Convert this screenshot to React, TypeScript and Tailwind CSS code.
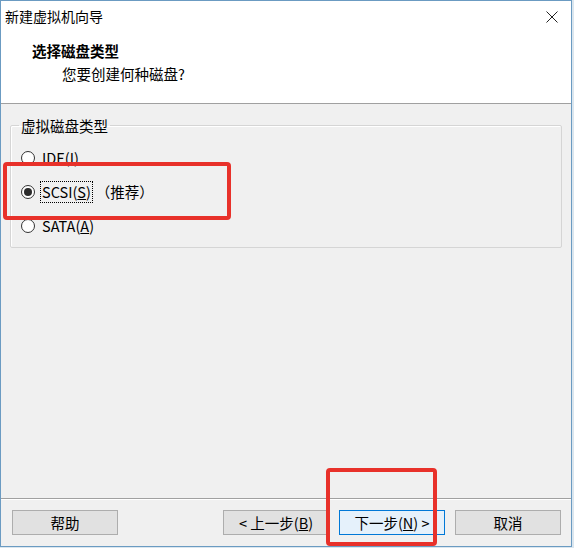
import React from "react";

const FONT = { fontFamily: '"Noto Sans CJK SC", "Noto Sans", "Liberation Sans", sans-serif' };

function Radio({ label, checked, focused, extra }: { label: React.ReactNode; checked?: boolean; focused?: boolean; extra?: string }) {
  return (
    <div className="flex h-[34px] items-center pl-[10px]">
      <span className="flex h-[14px] w-[14px] items-center justify-center rounded-full border border-[#333] bg-white">
        {checked && <span className="h-[8px] w-[8px] rounded-full bg-[#2b2b2b]" />}
      </span>
      <span
        className={
          "ml-[5px] px-[1px] leading-[20px] " +
          (focused ? "border border-dotted border-black" : "border border-transparent")
        }
      >
        {label}
      </span>
      {extra && <span className="ml-[3px]">{extra}</span>}
    </div>
  );
}

function Button({ children, primary }: { children: React.ReactNode; primary?: boolean }) {
  return (
    <button
      className={
        "flex h-[25px] w-[106px] items-center justify-center border text-[14.5px] text-black " +
        (primary ? "border-[#0078d7] bg-[#e5f1fb]" : "border-[#adadad] bg-[#e1e1e1]")
      }
    >
      {children}
    </button>
  );
}

export default function App() {
  return (
    <div className="relative h-[548px] w-[574px] bg-[#dbe6ee] text-black" style={FONT}>
      <div className="flex h-[547px] w-[572px] flex-col border border-[#6b9bc2] bg-[#f0f0f0]">
        {/* Title + header */}
        <div className="h-[103px] border-b border-[#a0a0a0] bg-white">
          <div className="flex h-[31px] items-center justify-between pl-[4px] pr-[13px]">
            <span className="text-[14px]">新建虚拟机向导</span>
            <svg width="12" height="12" viewBox="0 0 12 12">
              <path d="M0.5 0.5 L11.5 11.5 M11.5 0.5 L0.5 11.5" stroke="#222" strokeWidth="1" />
            </svg>
          </div>
          <div className="mt-[9px] pl-[31px] text-[14.5px] font-bold leading-[20px]">选择磁盘类型</div>
          <div className="mt-[3px] pl-[61px] text-[14.5px] leading-[20px]">您要创建何种磁盘?</div>
        </div>

        {/* Body */}
        <div className="flex flex-1 flex-col">
          <fieldset className="mx-[9px] mt-[14px] h-[130px] rounded-[2px] border border-[#d5d5d5] pt-[8px] text-[14.5px] shadow-[inset_1px_1px_0_#fff]">
            <legend className="ml-[8px] px-[2px] leading-[15px]">虚拟磁盘类型</legend>
            <Radio label={<>IDE(<u>I</u>)</>} />
            <Radio label={<>SCSI(<u>S</u>)</>} checked focused extra="（推荐）" />
            <Radio label={<>SATA(<u>A</u>)</>} />
          </fieldset>

          <div className="flex-1" />

          <div className="border-t border-[#a0a0a0] shadow-[0_1px_0_#fff]" />
          <div className="flex h-[47px] items-center pl-[11px] pr-[10px]">
            <Button>帮助</Button>
            <div className="flex-1" />
            <div className="flex gap-[10px]">
              <Button>
                &lt; 上一步(<u>B</u>)
              </Button>
              <Button primary>
                下一步(<u>N</u>) &gt;
              </Button>
              <Button>取消</Button>
            </div>
          </div>
        </div>
      </div>

      {/* red annotation boxes */}
      <div className="absolute left-[3px] top-[162px] h-[58px] w-[228px] rounded-[4px] border-4 border-[#e8312a]" />
      <div className="absolute left-[326px] top-[468px] h-[78px] w-[111px] rounded-[4px] border-4 border-[#e8312a]" />
    </div>
  );
}
